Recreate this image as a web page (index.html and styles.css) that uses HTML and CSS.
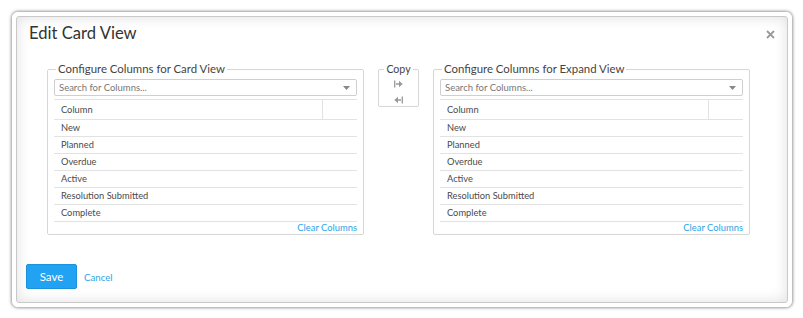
FILE: index.html
```html
<!DOCTYPE html>
<html lang="en">
<head>
    <meta charset="UTF-8">
    <meta name="viewport" content="width=device-width, initial-scale=1.0">
    <title>Edit Card View</title>
    <link rel="stylesheet" href="styles.css">
</head>
<body>
<div class="dialog">
    <div class="dialog-inner">
        <div class="dialog-header">
            <h1>Edit Card View</h1>
            <span class="close">
                <svg width="9" height="9" viewBox="0 0 9 9"><path d="M1 1L8 8M8 1L1 8" stroke="#9a9a9a" stroke-width="1.8" fill="none"/></svg>
            </span>
        </div>

        <div class="columns-row">
            <fieldset class="panel">
                <legend>Configure Columns for Card View</legend>
                <div class="search">
                    <span>Search for Columns...</span>
                    <svg width="7" height="4" viewBox="0 0 7 4"><path d="M0 0H7L3.5 4Z" fill="#888"/></svg>
                </div>
                <div class="col-head">
                    <span class="col-name">Column</span>
                    <span class="col-extra"></span>
                </div>
                <div class="col-row">New</div>
                <div class="col-row">Planned</div>
                <div class="col-row">Overdue</div>
                <div class="col-row">Active</div>
                <div class="col-row">Resolution Submitted</div>
                <div class="col-row">Complete</div>
                <div class="clear"><a href="#">Clear Columns</a></div>
            </fieldset>

            <fieldset class="copy">
                <legend>Copy</legend>
                <span class="copy-icon">
                    <svg width="9" height="8" viewBox="0 0 9 8"><path d="M0.7 0.5V7.5" stroke="#999" stroke-width="1.3"/><path d="M2 3.2H5V0.8L8.7 4L5 7.2V4.8H2Z" fill="#999"/></svg>
                </span>
                <span class="copy-icon">
                    <svg width="9" height="8" viewBox="0 0 9 8"><path d="M8.3 0.5V7.5" stroke="#999" stroke-width="1.3"/><path d="M7 3.2H4V0.8L0.3 4L4 7.2V4.8H7Z" fill="#999"/></svg>
                </span>
            </fieldset>

            <fieldset class="panel">
                <legend>Configure Columns for Expand View</legend>
                <div class="search">
                    <span>Search for Columns...</span>
                    <svg width="7" height="4" viewBox="0 0 7 4"><path d="M0 0H7L3.5 4Z" fill="#888"/></svg>
                </div>
                <div class="col-head">
                    <span class="col-name">Column</span>
                    <span class="col-extra"></span>
                </div>
                <div class="col-row">New</div>
                <div class="col-row">Planned</div>
                <div class="col-row">Overdue</div>
                <div class="col-row">Active</div>
                <div class="col-row">Resolution Submitted</div>
                <div class="col-row">Complete</div>
                <div class="clear"><a href="#">Clear Columns</a></div>
            </fieldset>
        </div>

        <div class="dialog-footer">
            <button class="btn-save">Save</button>
            <a href="#" class="cancel">Cancel</a>
        </div>
    </div>
</div>
</body>
</html>
```

FILE: styles.css
```css
body {
    font-family: Lato, "Open Sans", "Liberation Sans", sans-serif;
    margin: 0;
    padding: 12px;
    background-color: #fff;
    color: #444;
}
.dialog {
    width: 780px;
    height: 295px;
    box-sizing: border-box;
    border: 4px solid #fff;
    border-radius: 6px;
    box-shadow: 0 0 3px 1px rgba(0, 0, 0, 0.4);
}
.dialog-inner {
    height: 100%;
    box-sizing: border-box;
    border: 1px solid #c9c9c9;
    border-radius: 3px;
    box-shadow: inset 0 0 14px rgba(0, 0, 0, 0.13);
    padding: 5px 12px 0 9px;
}
.dialog-header {
    display: flex;
    justify-content: space-between;
    align-items: flex-start;
    padding-left: 3px;
}
h1 {
    margin: 0;
    font-size: 16.6px;
    line-height: 22px;
    font-weight: normal;
    color: #333;
}
.close {
    display: block;
    margin-top: 8px;
    line-height: 0;
}
.columns-row {
    display: flex;
    align-items: flex-start;
    gap: 14px;
    margin: 18px 0 0 21px;
}
fieldset {
    margin: 0;
    border: 1px solid #d6d6d6;
    border-radius: 2px;
}
legend {
    font-size: 11.4px;
    line-height: 14px;
    padding: 0 2px;
    color: #444;
}
.panel {
    width: 303px;
    padding: 3px 6px 0 6px;
}
.panel legend {
    margin-left: 2px;
}
.search {
    height: 15px;
    border: 1px solid #cfcfcf;
    border-radius: 2px;
    display: flex;
    justify-content: space-between;
    align-items: center;
    padding: 0 6px 0 4px;
    font-size: 9.5px;
    color: #777;
}
.col-head {
    display: flex;
    margin-top: 3px;
    height: 19px;
    border-top: 1px solid #e2e2e2;
    border-bottom: 1px solid #e2e2e2;
    font-size: 9.3px;
    color: #4a4a4a;
}
.col-name {
    flex: 1;
    padding-left: 7px;
    line-height: 19px;
    border-right: 1px solid #e2e2e2;
}
.col-extra {
    width: 34px;
}
.col-row {
    height: 16px;
    line-height: 16px;
    border-bottom: 1px solid #e2e2e2;
    padding-left: 7px;
    font-size: 9.3px;
    color: #4a4a4a;
}
.clear {
    text-align: right;
    font-size: 9.4px;
    line-height: 12px;
}
.clear a,
.cancel {
    color: #2fa4e7;
    text-decoration: none;
}
.copy {
    width: 41px;
    box-sizing: border-box;
    padding: 4px 0 2px 0;
    display: flex;
    flex-direction: column;
    align-items: center;
    gap: 8px;
}
.copy legend {
    margin: 0 auto;
    font-size: 10.6px;
}
.copy-icon {
    line-height: 0;
}
.dialog-footer {
    display: flex;
    align-items: center;
    gap: 7px;
    margin-top: 29px;
}
.btn-save {
    width: 51px;
    height: 25px;
    border: 1px solid #1a92de;
    border-radius: 2px;
    background-color: #22a2f2;
    color: #fff;
    font-family: inherit;
    font-size: 11.5px;
    cursor: pointer;
}
.cancel {
    font-size: 9.7px;
}
```
